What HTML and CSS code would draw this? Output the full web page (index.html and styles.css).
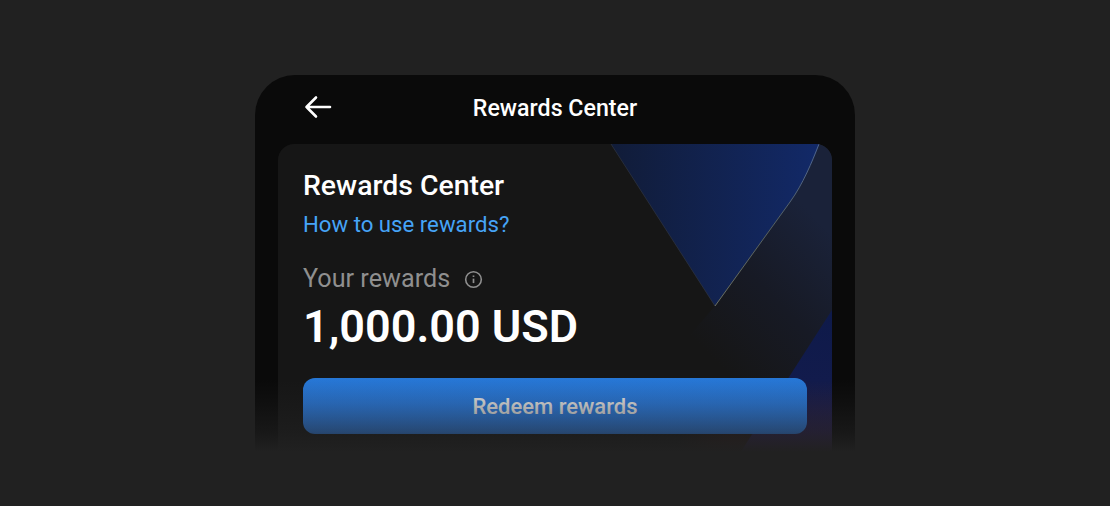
FILE: index.html
```html
<!DOCTYPE html>
<html lang="en">
<head>
  <meta charset="UTF-8">
  <title>Rewards Center</title>
  <link rel="stylesheet" href="styles.css">
</head>
<body>

<div class="phone">
  <div class="nav">
    <a class="back" href="#" aria-label="Back">
      <svg width="28" height="24" viewBox="0 0 28 24" fill="none" stroke="#fff" stroke-width="2.6" stroke-linecap="round" stroke-linejoin="round">
        <path d="M2.5 12H26M12 2.5L2.5 12L12 21.5"/>
      </svg>
    </a>
    <div class="nav-title">Rewards Center</div>
  </div>

  <div class="card">
    <svg class="card-art" width="554" height="320" viewBox="0 0 554 320" fill="none">
      <defs>
        <linearGradient id="tint" x1="430" y1="210" x2="554" y2="90" gradientUnits="userSpaceOnUse">
          <stop offset="0" stop-color="#161616"/>
          <stop offset="0.5" stop-color="#171a25"/>
          <stop offset="1" stop-color="#1a2239"/>
        </linearGradient>
        <linearGradient id="wedge" x1="333" y1="0" x2="541" y2="0" gradientUnits="userSpaceOnUse">
          <stop offset="0" stop-color="#111c38"/>
          <stop offset="1" stop-color="#122968"/>
        </linearGradient>
        <linearGradient id="low" x1="0" y1="166" x2="0" y2="310" gradientUnits="userSpaceOnUse">
          <stop offset="0" stop-color="#0e1a4a"/>
          <stop offset="0.5" stop-color="#121b4c"/>
          <stop offset="1" stop-color="#33204a"/>
        </linearGradient>
        <linearGradient id="edge" x1="437" y1="162" x2="541" y2="0" gradientUnits="userSpaceOnUse">
          <stop offset="0" stop-color="#6b6f60"/>
          <stop offset="0.5" stop-color="#56605f"/>
          <stop offset="1" stop-color="#4d6694"/>
        </linearGradient>
        <radialGradient id="warm" cx="458" cy="315" r="60" gradientUnits="userSpaceOnUse">
          <stop offset="0" stop-color="#3a1a18" stop-opacity="0.7"/>
          <stop offset="1" stop-color="#3a1a18" stop-opacity="0"/>
        </radialGradient>
      </defs>
      <path d="M437 162L512 58C525 40 534 18 541 0H554V320H300Z" fill="url(#tint)"/>
      <path d="M398 250H518V320H398Z" fill="url(#warm)"/>
      <path d="M554 166V320H455Z" fill="url(#low)"/>
      <path d="M333 0L437 162L512 58C525 40 534 18 541 0Z" fill="url(#wedge)"/>
      <path d="M333 0L437 162" stroke="#2f3542" stroke-width="0.7"/>
      <path d="M437 162L512 58C525 40 534 18 541 0" stroke="url(#edge)" stroke-width="1"/>
    </svg>

    <div class="card-title">Rewards Center</div>
    <a class="how-link" href="#">How to use rewards?</a>

    <div class="balance-label">
      <span>Your rewards</span>
      <svg width="19" height="19" viewBox="0 0 18 18" fill="none" stroke="#8f8f8f">
        <circle cx="9" cy="9" r="7.4" stroke-width="1.5"/>
        <path d="M9 8.2V12.4" stroke-width="1.6"/>
        <path d="M9 5.2V6.6" stroke-width="1.6"/>
      </svg>
    </div>
    <div class="balance">1,000.00 USD</div>

    <button class="redeem" type="button">Redeem rewards</button>
  </div>

  <div class="fade"></div>
</div>

</body>
</html>
```

FILE: styles.css
```css
body {
  margin: 0;
  height: 506px;
  overflow: hidden;
  background-color: #212121;
  font-family: 'Roboto', sans-serif;
  color: #fff;
}
.phone {
  position: relative;
  width: 600px;
  height: 377px;
  margin: 75px auto 0;
  padding: 0 23px;
  box-sizing: border-box;
  overflow: hidden;
  background: #0a0a0a;
  border-radius: 40px 40px 0 0;
}
.nav {
  position: relative;
  height: 69px;
  display: flex;
  align-items: center;
  justify-content: center;
  padding-bottom: 4px;
  box-sizing: border-box;
}
.back {
  position: absolute;
  left: 26px;
  top: 20px;
  display: flex;
}
.nav-title {
  font-size: 23.2px;
  font-weight: 475;
}
.card {
  position: relative;
  height: 340px;
  padding: 25px 25px 0;
  box-sizing: border-box;
  overflow: hidden;
  background: #161616;
  border-radius: 16px;
}
.card-art {
  position: absolute;
  left: 0;
  top: 0;
}
.card-title, .how-link, .balance-label, .balance, .redeem {
  position: relative;
}
.card-title {
  font-size: 28.4px;
  font-weight: 475;
  line-height: 34px;
}
.how-link {
  display: block;
  margin-top: 7px;
  font-size: 22.2px;
  line-height: 28px;
  color: #46a4f7;
  text-decoration: none;
}
.balance-label {
  display: flex;
  align-items: center;
  gap: 14px;
  margin-top: 25px;
  font-size: 25.2px;
  line-height: 32px;
  color: #8f8f8f;
}
.balance {
  margin-top: 7px;
  font-size: 45px;
  font-weight: 650;
  line-height: 50px;
}
.redeem {
  display: block;
  width: 100%;
  height: 56px;
  margin-top: 26px;
  border: none;
  border-radius: 12px;
  background: linear-gradient(#2676d4, #2f82ee);
  color: #eee;
  font-family: inherit;
  font-size: 22px;
  font-weight: 475;
}
.fade {
  position: absolute;
  left: 0;
  right: 0;
  top: 305px;
  bottom: 0;
  background: linear-gradient(rgba(33,33,33,0) 0%, rgba(33,33,33,0.25) 33%, rgba(33,33,33,0.6) 72%, #212121 100%);
}
```
